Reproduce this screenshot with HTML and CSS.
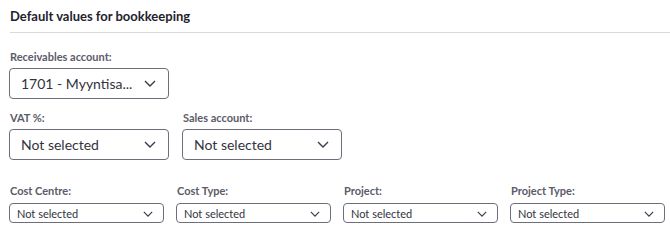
FILE: index.html
```html
<!DOCTYPE html>
<html lang="en">
<head>
    <meta charset="UTF-8">
    <meta name="viewport" content="width=device-width, initial-scale=1.0">
    <title>Default values for bookkeeping</title>
    <link rel="stylesheet" href="styles.css">
</head>
<body>
<div class="bookkeeping">
    <h3 class="sectionTitle">Default values for bookkeeping</h3>

    <div class="fieldRow">
        <div class="field">
            <label>Receivables account:</label>
            <div class="select">
                <span class="selectValue">1701 - Myyntisa...</span>
                <svg class="chevron" viewBox="0 0 12 7"><path d="M1 1l5 5 5-5"/></svg>
            </div>
        </div>
    </div>

    <div class="fieldRow">
        <div class="field">
            <label>VAT %:</label>
            <div class="select">
                <span class="selectValue">Not selected</span>
                <svg class="chevron" viewBox="0 0 12 7"><path d="M1 1l5 5 5-5"/></svg>
            </div>
        </div>
        <div class="field">
            <label>Sales account:</label>
            <div class="select">
                <span class="selectValue">Not selected</span>
                <svg class="chevron" viewBox="0 0 12 7"><path d="M1 1l5 5 5-5"/></svg>
            </div>
        </div>
    </div>

    <div class="fieldRow small">
        <div class="field">
            <label>Cost Centre:</label>
            <div class="select">
                <span class="selectValue">Not selected</span>
                <svg class="chevron" viewBox="0 0 12 7"><path d="M1 1l5 5 5-5"/></svg>
            </div>
        </div>
        <div class="field">
            <label>Cost Type:</label>
            <div class="select">
                <span class="selectValue">Not selected</span>
                <svg class="chevron" viewBox="0 0 12 7"><path d="M1 1l5 5 5-5"/></svg>
            </div>
        </div>
        <div class="field">
            <label>Project:</label>
            <div class="select">
                <span class="selectValue">Not selected</span>
                <svg class="chevron" viewBox="0 0 12 7"><path d="M1 1l5 5 5-5"/></svg>
            </div>
        </div>
        <div class="field">
            <label>Project Type:</label>
            <div class="select">
                <span class="selectValue">Not selected</span>
                <svg class="chevron" viewBox="0 0 12 7"><path d="M1 1l5 5 5-5"/></svg>
            </div>
        </div>
    </div>
</div>
</body>
</html>
```

FILE: styles.css
```css
body {
    margin: 0;
    background: #ffffff;
    font-family: "Lato", "Open Sans", sans-serif;
    color: #333340;
}

.bookkeeping {
    padding: 8px 0 0 9px;
}

.sectionTitle {
    margin: 0 0 0 1px;
    font-size: 13px;
    font-weight: 700;
    color: #22222c;
    line-height: 16px;
    padding-bottom: 8px;
    border-bottom: 1px solid #d8d8de;
}

/*Rows*/
.fieldRow {
    display: flex;
    gap: 13px;
    margin-top: 17px;
}

.fieldRow + .fieldRow {
    margin-top: 12px;
}

.fieldRow.small {
    margin-top: 24px;
    gap: 12px;
}

.field label {
    display: block;
    font-size: 11px;
    font-weight: 700;
    color: #5b5b68;
    line-height: 14px;
    margin-bottom: 4px;
    padding-left: 1px;
}

/*Select*/
.select {
    box-sizing: border-box;
    width: 160px;
    height: 31px;
    border: 1px solid #6e6e7a;
    border-radius: 4px;
    display: flex;
    align-items: center;
    justify-content: space-between;
    padding: 0 12px 0 11px;
    font-size: 14px;
    color: #33333d;
}

.select .chevron {
    width: 12px;
    height: 7px;
    fill: none;
    stroke: #3a3a44;
    stroke-width: 1.4;
}

.fieldRow.small .field label {
    margin-bottom: 5px;
}

.fieldRow.small .select {
    width: 155px;
    height: 20px;
    font-size: 11px;
    padding: 0 10px 0 7px;
}

.fieldRow.small .select .chevron {
    width: 10px;
    height: 6px;
    margin-top: 2px;
}
```
